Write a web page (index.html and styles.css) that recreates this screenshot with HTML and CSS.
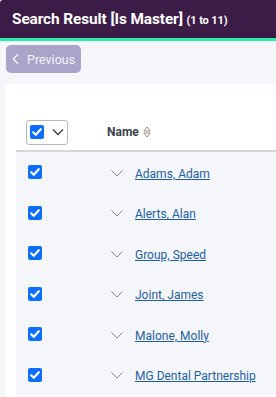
FILE: index.html
```html
<!DOCTYPE html>
<html lang="en">
<head>
    <meta charset="UTF-8">
    <meta name="viewport" content="width=device-width, initial-scale=1.0">
    <title>Search Result</title>
    <link rel="stylesheet" href="styles.css">
</head>
<body>
    <div class="header">
        <h1>Search Result [Is Master] <small>(1 to 11)</small></h1>
    </div>

    <div class="toolbar">
        <button class="prev">
            <svg width="8" height="12" viewBox="0 0 8 12"><path d="M6 1 1.5 6 6 11" fill="none" stroke="currentColor" stroke-width="1.5"/></svg>
            Previous
        </button>
    </div>

    <div class="card">
        <table class="results">
            <thead>
                <tr>
                    <th class="col-check">
                        <div class="select-all">
                            <span class="check"></span>
                            <svg width="12" height="8" viewBox="0 0 12 8"><path d="M1 1.5 6 6.5 11 1.5" fill="none" stroke="#3a3f4b" stroke-width="1.4"/></svg>
                        </div>
                    </th>
                    <th class="col-name">
                        Name
                        <svg class="sort" width="8" height="12" viewBox="0 0 8 12"><path d="M4 1 7.2 5H0.8Z M4 11 7.2 7H0.8Z" fill="none" stroke="#8c8070" stroke-width="0.9"/></svg>
                    </th>
                </tr>
            </thead>
            <tbody>
                <tr><td class="col-check"><span class="check"></span></td><td class="col-name"><svg class="expand" width="12" height="7" viewBox="0 0 12 7"><path d="M0.5 0.5 6 6 11.5 0.5" fill="none" stroke="#8a7fb0" stroke-width="1"/></svg><a href="#">Adams, Adam</a></td></tr>
                <tr><td class="col-check"><span class="check"></span></td><td class="col-name"><svg class="expand" width="12" height="7" viewBox="0 0 12 7"><path d="M0.5 0.5 6 6 11.5 0.5" fill="none" stroke="#8a7fb0" stroke-width="1"/></svg><a href="#">Alerts, Alan</a></td></tr>
                <tr><td class="col-check"><span class="check"></span></td><td class="col-name"><svg class="expand" width="12" height="7" viewBox="0 0 12 7"><path d="M0.5 0.5 6 6 11.5 0.5" fill="none" stroke="#8a7fb0" stroke-width="1"/></svg><a href="#">Group, Speed</a></td></tr>
                <tr><td class="col-check"><span class="check"></span></td><td class="col-name"><svg class="expand" width="12" height="7" viewBox="0 0 12 7"><path d="M0.5 0.5 6 6 11.5 0.5" fill="none" stroke="#8a7fb0" stroke-width="1"/></svg><a href="#">Joint, James</a></td></tr>
                <tr><td class="col-check"><span class="check"></span></td><td class="col-name"><svg class="expand" width="12" height="7" viewBox="0 0 12 7"><path d="M0.5 0.5 6 6 11.5 0.5" fill="none" stroke="#8a7fb0" stroke-width="1"/></svg><a href="#">Malone, Molly</a></td></tr>
                <tr><td class="col-check"><span class="check"></span></td><td class="col-name"><svg class="expand" width="12" height="7" viewBox="0 0 12 7"><path d="M0.5 0.5 6 6 11.5 0.5" fill="none" stroke="#8a7fb0" stroke-width="1"/></svg><a href="#">MG Dental Partnership</a></td></tr>
            </tbody>
        </table>
    </div>
</body>
</html>
```

FILE: styles.css
```css
html, body {
    margin: 0;
    padding: 0;
}
body {
    font-family: Roboto, "Liberation Sans", sans-serif;
    background: #f5f6fa;
    width: 276px;
    height: 397px;
    overflow: hidden;
}
.header {
    background: #3b1c47;
    border-bottom: 3px solid #2bedaa;
    height: 38px;
    display: flex;
    align-items: center;
    padding: 0 12px;
    border-radius: 3px 0 0 0;
}
.header h1 {
    margin: 0;
    color: #fff;
    font-size: 15.4px;
    font-weight: 700;
    white-space: nowrap;
    letter-spacing: -0.1px;
}
.header small {
    font-size: 11px;
    font-weight: 700;
}
.toolbar {
    padding: 4px 6px 0;
}
.prev {
    display: flex;
    align-items: center;
    gap: 7px;
    background: #aba4c9;
    color: #f2f0f8;
    border: none;
    border-radius: 5px;
    height: 28px;
    width: 75px;
    padding: 0 0 0 6px;
    font-family: inherit;
    font-size: 12.5px;
}
.card {
    background: #fff;
    margin: 11px 0 0 5px;
    padding: 30px 0 0 11px;
    height: 400px;
}
.results {
    border-collapse: collapse;
    width: 300px;
}
.results thead th {
    height: 36px;
    border-bottom: 2px solid #d3d6df;
    background: #fff;
    text-align: left;
    font-size: 12px;
    font-weight: 700;
    color: #3a3f4b;
    padding: 0;
}
.results tbody td {
    height: 40.5px;
    background: #f5f6fa;
    padding: 0;
}
.col-check {
    width: 81px;
    padding-left: 10px !important;
}
.results tbody .col-check {
    width: 79px;
    padding-left: 12px !important;
}
.select-all {
    display: flex;
    align-items: center;
    gap: 8px;
    width: 37px;
    height: 23px;
    border: 1px solid #b5b8bf;
    border-radius: 3px;
    padding-left: 3px;
}
.check {
    display: block;
    width: 14px;
    height: 14px;
    border-radius: 2px;
    background: #0d6efd url("data:image/svg+xml,%3Csvg xmlns='http://www.w3.org/2000/svg' viewBox='0 0 14 14'%3E%3Cpath d='M3.2 7.3 5.8 9.8 10.8 4.2' fill='none' stroke='white' stroke-width='2.2' stroke-linecap='round' stroke-linejoin='round'/%3E%3C/svg%3E") center / 14px no-repeat;
}
.sort {
    vertical-align: -2px;
    margin-left: 1px;
}
.col-name {
    white-space: nowrap;
}
.expand {
    margin: 0 12px 0 4px;
    vertical-align: 1px;
}
.col-name a {
    color: #1d5ea8;
    font-size: 12px;
    text-decoration: underline;
}
```
